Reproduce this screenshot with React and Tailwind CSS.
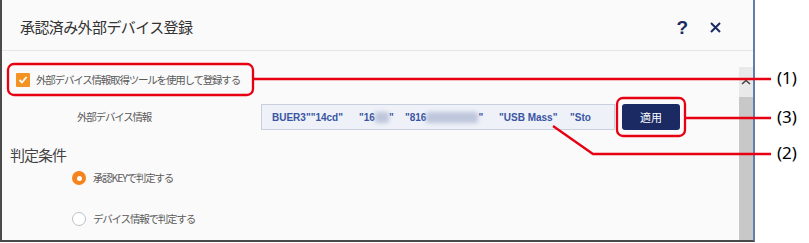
import React from "react";

const jp = { fontFamily: '"Noto Sans CJK JP", "Noto Sans", sans-serif' };

function Blur({ w }) {
  return (
    <span
      className="inline-block h-[11px] align-middle rounded-[2px] bg-[#aab4d0] blur-[2px] opacity-70"
      style={{ width: w }}
    />
  );
}

export default function App() {
  return (
    <div className="relative w-[809px] h-[243px] bg-white overflow-hidden" style={jp}>
      <div className="w-[755px] h-[242px] bg-[#fafafa] border-l-2 border-b-2 border-r-2 border-l-[#4a4a4a] border-b-[#4a4a4a] border-r-[#5f7fa8] flex flex-col">
        <div className="h-[51px] shrink-0 border-b border-[#e6e6e6] flex items-center justify-between pl-[18px] pr-[32px] pt-[4px]">
          <span className="text-[15px] tracking-[-0.6px] text-[#333]">承認済み外部デバイス登録</span>
          <div className="flex items-center gap-[22px]">
            <span className="text-[19px] font-bold text-[#1b2a63] leading-none" style={{ fontFamily: '"Liberation Sans", sans-serif' }}>?</span>
            <svg width="11" height="11" viewBox="0 0 11 11">
              <path d="M1 1 L10 10 M10 1 L1 10" stroke="#1b2a63" strokeWidth="2" />
            </svg>
          </div>
        </div>
        <div className="flex flex-1 min-h-0">
          <div className="flex-1 pt-[16px] text-[10.5px] tracking-[-1.2px] text-[#5a5a5a]">
            <div className="h-[26px] flex items-center pl-[14px] gap-[6px]">
              <span className="w-[14px] h-[14px] bg-[#f39323] rounded-[1px] flex items-center justify-center">
                <svg width="10" height="10" viewBox="0 0 10 10">
                  <path d="M1.5 5 L4 7.5 L8.5 2" stroke="white" strokeWidth="1.8" fill="none" />
                </svg>
              </span>
              <span>外部デバイス情報取得ツールを使用して登録する</span>
            </div>
            <div className="mt-[11px] h-[26px] flex items-center">
              <span className="pl-[75px] w-[259px] shrink-0">外部デバイス情報</span>
              <div
                className="w-[354px] h-[26px] bg-[#eef1f8] border border-[#c9d0dd] flex items-center pl-[10px] overflow-hidden whitespace-nowrap text-[10px] font-bold tracking-normal text-[#3a55a3]"
                style={{ fontFamily: '"Liberation Sans", sans-serif' }}
              >
                <span className="inline-block w-[87px] shrink-0">BUER3""14cd"</span>
                <span className="inline-block w-[46px] shrink-0">"16<Blur w={14} />"</span>
                <span className="inline-block w-[94px] shrink-0">"816<Blur w={52} />"</span>
                <span className="inline-block w-[71px] shrink-0">"USB Mass"</span>
                <span className="inline-block w-[21px] shrink-0 overflow-hidden">"Sto</span>
              </div>
              <button className="ml-[7px] w-[58px] h-[26px] rounded-[3px] bg-[#1b2a63] text-white text-[11px] tracking-normal">
                適用
              </button>
            </div>
            <div className="mt-[13px] h-[24px] flex items-center pl-[8px] text-[15px] tracking-[-1px] text-[#444]">
              判定条件
            </div>
            <div className="h-[22px] flex items-center pl-[70px] gap-[7px]">
              <span className="w-[14px] h-[14px] rounded-full bg-[#f5841f] flex items-center justify-center">
                <span className="w-[5px] h-[5px] rounded-full bg-white" />
              </span>
              <span>承認KEYで判定する</span>
            </div>
            <div className="mt-[19px] h-[22px] flex items-center pl-[70px] gap-[7px]">
              <span className="w-[14px] h-[14px] rounded-full bg-white border border-[#b9c1ca]" />
              <span>デバイス情報で判定する</span>
            </div>
          </div>
          <div className="w-[14px] shrink-0 pt-[16px] flex flex-col">
            <div className="h-[30px] bg-[#e9e9e9] flex items-center justify-center">
              <svg width="10" height="6" viewBox="0 0 10 6">
                <path d="M1 5 L5 1.5 L9 5" stroke="#444" strokeWidth="1.6" fill="none" />
              </svg>
            </div>
            <div className="flex-1 bg-[#c8c8c8]" />
          </div>
        </div>
      </div>

      <svg className="absolute inset-0 pointer-events-none" width="809" height="243">
        <rect x="8" y="64" width="245" height="31" rx="6" fill="none" stroke="#e60012" strokeWidth="2.3" />
        <line x1="253" y1="79" x2="771" y2="79" stroke="#e60012" strokeWidth="2.3" />
        <rect x="617" y="98" width="68" height="38" rx="6" fill="none" stroke="#e60012" strokeWidth="2.3" />
        <line x1="685" y1="118" x2="771" y2="118" stroke="#e60012" strokeWidth="2.3" />
        <polyline points="553,126 593,154 771,154" fill="none" stroke="#e60012" strokeWidth="2.3" />
      </svg>
      <span className="absolute left-[777px] top-[67px] text-[17px] leading-[22px] text-black" style={{ fontFamily: '"Noto Sans", sans-serif' }}>(1)</span>
      <span className="absolute left-[777px] top-[106px] text-[17px] leading-[22px] text-black" style={{ fontFamily: '"Noto Sans", sans-serif' }}>(3)</span>
      <span className="absolute left-[777px] top-[142px] text-[17px] leading-[22px] text-black" style={{ fontFamily: '"Noto Sans", sans-serif' }}>(2)</span>
    </div>
  );
}
